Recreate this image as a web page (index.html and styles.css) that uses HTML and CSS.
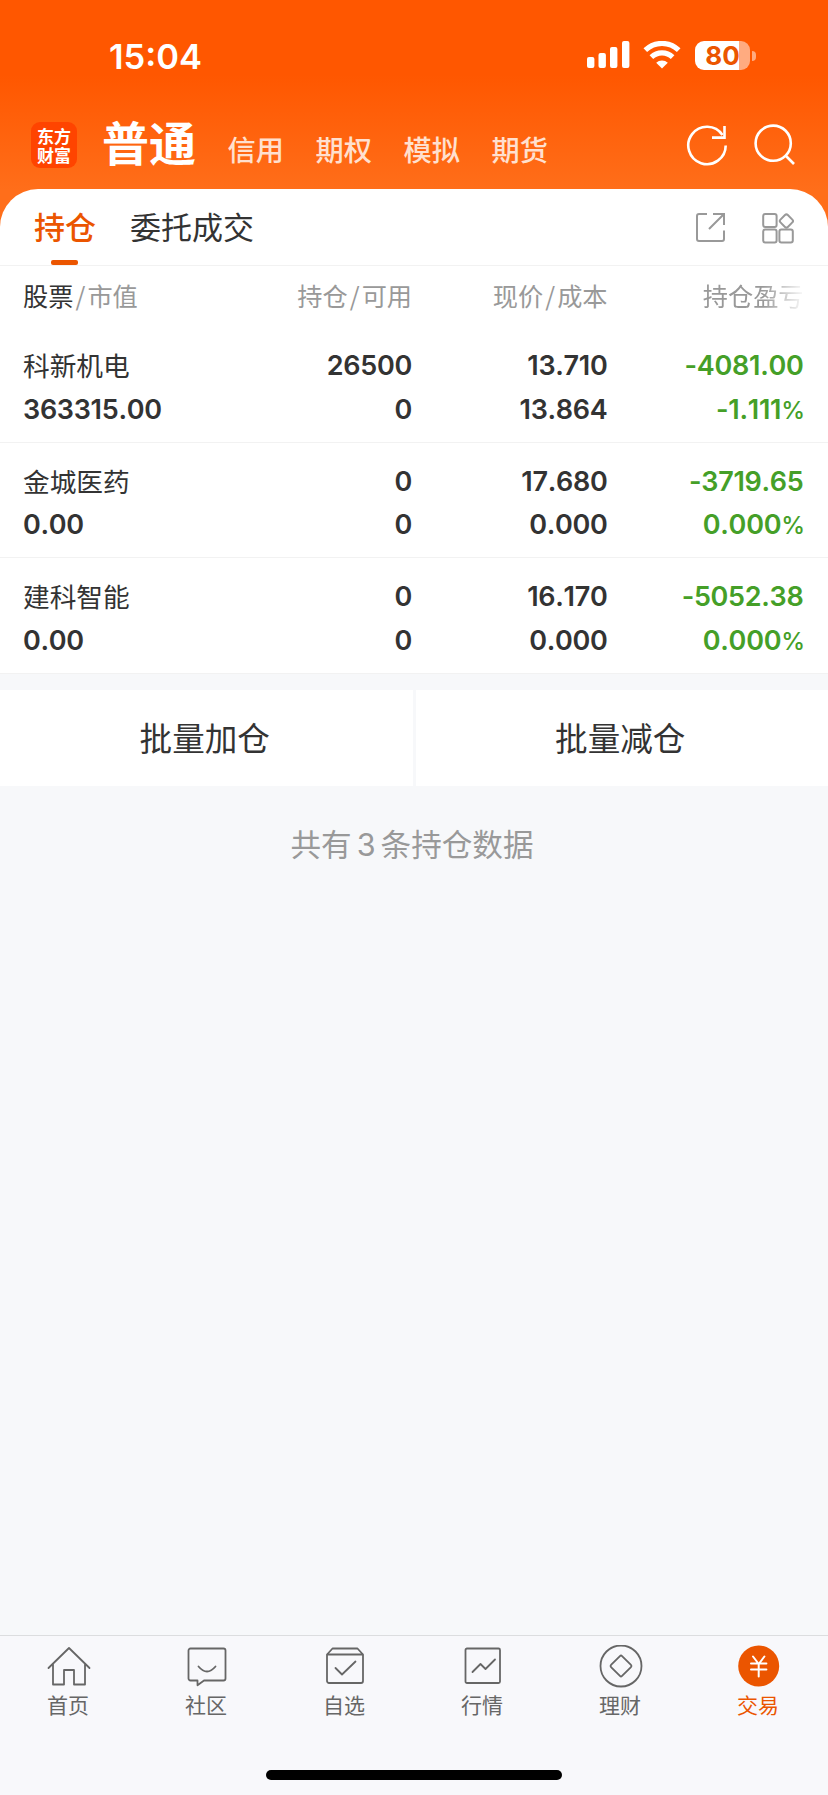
FILE: index.html
```html
<!DOCTYPE html>
<html lang="zh-CN">
<head>
    <meta charset="UTF-8">
    <meta name="viewport" content="width=device-width, initial-scale=1.0">
    <title>东方财富 - 交易</title>
    <link rel="stylesheet" href="styles.css">
</head>
<body>
    <header class="header">
        <div class="status-bar">
            <span class="time">15:04</span>
            <div class="status-icons">
                <svg class="signal" width="43" height="28" viewBox="0 0 43 28" fill="#fff">
                    <rect x="0" y="16" width="7.4" height="11" rx="2"/>
                    <rect x="11.5" y="12" width="7.4" height="15" rx="2"/>
                    <rect x="23" y="6" width="7.4" height="21" rx="2"/>
                    <rect x="35" y="0" width="7.4" height="27" rx="2"/>
                </svg>
                <svg class="wifi" width="38" height="28" viewBox="0 0 38 28" fill="none" stroke="#fff" stroke-width="5.2">
                    <path d="M2.3 9.2a24 24 0 0 1 33.4 0"/>
                    <path d="M8.4 16.2a15.2 15.2 0 0 1 21.2 0"/>
                    <path d="M19 27.5l-5.8-5.8a8.4 8.4 0 0 1 11.6 0z" fill="#fff" stroke="none"/>
                </svg>
                <div class="battery"><span>80</span></div>
                <i class="battery-cap"></i>
            </div>
        </div>
        <div class="nav">
            <div class="logo">东方财富</div>
            <div class="nav-list">
                <span class="nav-current">普通</span>
                <span>信用</span>
                <span>期权</span>
                <span>模拟</span>
                <span>期货</span>
            </div>
            <div class="nav-icons">
                <svg width="42" height="42" viewBox="0 0 42 42" fill="none" stroke="#fff" stroke-width="2.6">
                    <path d="M39.7 21.5A18.7 18.7 0 1 1 36.5 11"/>
                    <path d="M38.5 2v11.6H26"/>
                </svg>
                <svg width="42" height="42" viewBox="0 0 42 42" fill="none" stroke="#fff" stroke-width="2.6">
                    <circle cx="19.2" cy="19.2" r="17.6"/>
                    <path d="M31.5 31.5l8.5 8.5"/>
                </svg>
            </div>
        </div>
    </header>

    <main>
        <section class="panel">
            <div class="tabs">
                <span class="tab active">持仓</span>
                <span class="tab">委托成交</span>
                <div class="tab-icons">
                    <svg width="32" height="32" viewBox="0 0 32 32" fill="none" stroke="#999" stroke-width="2">
                        <path d="M12 2H4a2 2 0 0 0-2 2v23a2 2 0 0 0 2 2h23a2 2 0 0 0 2-2V18.5"/>
                        <path d="M18 2h11v11M29 2L14 17"/>
                    </svg>
                    <svg width="32" height="32" viewBox="0 0 32 32" fill="none" stroke="#999" stroke-width="2">
                        <rect x="1.2" y="2" width="13.4" height="13" rx="2"/>
                        <rect x="1.2" y="17.6" width="13.4" height="13" rx="2"/>
                        <rect x="17.4" y="17.6" width="13.4" height="13" rx="2"/>
                        <rect x="19.2" y="3.8" width="10.4" height="10.4" rx="2" transform="rotate(45 24.4 9)"/>
                    </svg>
                </div>
            </div>
            <div class="row head">
                <div><b>股票</b><i>/</i>市值</div>
                <div>持仓<i>/</i>可用</div>
                <div>现价<i>/</i>成本</div>
                <div class="fade">持仓盈亏</div>
            </div>
            <div class="row">
                <div><span class="name">科新机电</span><span>363315.00</span></div>
                <div><span>26500</span><span>0</span></div>
                <div><span>13.710</span><span>13.864</span></div>
                <div class="down"><span>-4081.00</span><span>-1.111<small>%</small></span></div>
            </div>
            <div class="row">
                <div><span class="name">金城医药</span><span>0.00</span></div>
                <div><span>0</span><span>0</span></div>
                <div><span>17.680</span><span>0.000</span></div>
                <div class="down"><span>-3719.65</span><span>0.000<small>%</small></span></div>
            </div>
            <div class="row">
                <div><span class="name">建科智能</span><span>0.00</span></div>
                <div><span>0</span><span>0</span></div>
                <div><span>16.170</span><span>0.000</span></div>
                <div class="down"><span>-5052.38</span><span>0.000<small>%</small></span></div>
            </div>
        </section>

        <div class="batch">
            <button>批量加仓</button>
            <button>批量减仓</button>
        </div>
        <p class="total">共有<em>3</em>条持仓数据</p>
    </main>

    <footer class="tabbar">
        <nav class="tabbar-list">
            <a class="tabbar-item">
                <svg width="44" height="44" viewBox="0 0 44 44">
                    <path d="M1.5 23L22 3l20.500 20M6 19v20.500h11V25h10v14.500h11V19"/>
                </svg>
                <span>首页</span>
            </a>
            <a class="tabbar-item">
                <svg width="44" height="44" viewBox="0 0 44 44">
                    <path d="M5.500 3.500h33a2 2 0 0 1 2 2V33.500a2 2 0 0 1-2 2H19l-6.500 4.800v-4.800H5.500a2 2 0 0 1-2-2V5.500a2 2 0 0 1 2-2z"/>
                    <path d="M13.500 21.500q8.500 10 17 0"/>
                </svg>
                <span>社区</span>
            </a>
            <a class="tabbar-item">
                <svg width="44" height="44" viewBox="0 0 44 44">
                    <path d="M4 9.500h36V36a2 2 0 0 1-2 2H6a2 2 0 0 1-2-2zM4 9.500l5.500-6h25l5.500 6"/>
                    <path d="M12.500 23l6.500 6.500L32.500 16.500"/>
                </svg>
                <span>自选</span>
            </a>
            <a class="tabbar-item">
                <svg width="44" height="44" viewBox="0 0 44 44">
                    <rect x="4.500" y="3.500" width="34.500" height="34.500" rx="1.500"/>
                    <path d="M11.500 27l8-8 5 5 9.500-9.500"/>
                </svg>
                <span>行情</span>
            </a>
            <a class="tabbar-item">
                <svg width="44" height="44" viewBox="0 0 44 44">
                    <circle cx="22" cy="21" r="20.500"/>
                    <rect x="14.200" y="13.200" width="15.600" height="15.600" rx="1.500" transform="rotate(45 22 21)"/>
                </svg>
                <span>理财</span>
            </a>
            <a class="tabbar-item active">
                <svg width="44" height="44" viewBox="0 0 44 44">
                    <circle class="coin" cx="21.700" cy="21" r="20.500"/>
                    <path class="yen" d="M16 11.500l5.700 7.500 5.700-7.500M21.700 19V31.500M14 18.500h15.400M14 24.500h15.400"/>
                </svg>
                <span>交易</span>
            </a>
        </nav>
        <div class="home-indicator"></div>
    </footer>
</body>
</html>
```

FILE: styles.css
```css
* {
    box-sizing: border-box;
}
body {
    margin: 0;
    height: 1795px;
    display: flex;
    flex-direction: column;
    background-color: #f7f8fa;
    color: #333;
    font-family: "Noto Sans CJK SC", sans-serif;
}
i, em {
    font-style: normal;
}

/* header */
.header {
    height: 231px;
    background: linear-gradient(#ff5700 0, #ff5700 75px, #ff6e1a 190px, #ff6e1a 100%);
    color: #fff;
}
.status-bar {
    display: flex;
    justify-content: space-between;
    height: 112px;
    padding: 35px 73px 0 109px;
}
.time {
    padding-top: 1px;
    font: 600 34.5px/42px Inter, sans-serif;
}
.status-icons {
    display: flex;
    align-items: flex-start;
    padding-top: 6px;
}
.wifi {
    margin-left: 13px;
}
.battery {
    width: 55px;
    height: 29px;
    margin-left: 14px;
    border-radius: 9px;
    background: linear-gradient(90deg, #fff 44px, #ffab80 44px);
    color: #eb5500;
    font: 700 26px/29px Inter, sans-serif;
    text-align: center;
}
.battery-cap {
    width: 4px;
    height: 10px;
    margin: 10px -1px 0 2px;
    border-radius: 0 5px 5px 0;
    background-color: #ffab80;
}
.nav {
    display: flex;
    padding: 0 32px 0 31px;
}
.logo {
    width: 46px;
    height: 46px;
    margin-top: 10px;
    padding: 4px 5px 0 6px;
    border-radius: 9px;
    background-color: #ff4400;
    font-size: 17px;
    font-weight: 700;
    line-height: 19px;
}
.nav-list {
    display: flex;
    align-items: baseline;
    gap: 31.6px;
    height: 66px;
    margin: -4px 0 0 25px;
    font-size: 28.2px;
    font-weight: 500;
    line-height: 66px;
    color: #ffe0cf;
}
.nav-current {
    font-size: 47px;
    font-weight: 700;
    color: #fff;
}
.nav-icons {
    display: flex;
    gap: 26px;
    margin: 12px 0 0 auto;
}

/* holdings */
.panel {
    margin-top: -42px;
    border-radius: 38px 38px 0 0;
    background-color: #fff;
}
.tabs {
    display: flex;
    height: 77px;
    padding: 0 34px 0 34px;
    border-bottom: 1px solid #f2f2f2;
    font-size: 31px;
    line-height: 74px;
}
.tab {
    margin-right: 34px;
}
.tab.active {
    position: relative;
    color: #eb5500;
    font-weight: 500;
}
.tab.active::after {
    content: "";
    position: absolute;
    left: 17px;
    bottom: 0;
    width: 27px;
    height: 5px;
    border-radius: 2px;
    background-color: #eb5500;
}
.tab-icons {
    display: flex;
    gap: 35px;
    margin: 23px 0 0 auto;
}
.row {
    display: grid;
    grid-template-columns: 193px 196px 195.5px 196px;
    height: 115.6px;
    padding: 17px 23px 0;
    border-bottom: 1px solid #f2f2f2;
    font: 600 27px/43.6px Inter, sans-serif;
    font-kerning: none;
    letter-spacing: -0.3px;
    text-align: right;
}
.row div:first-child {
    text-align: left;
}
.row span {
    display: block;
    height: 43.6px;
}
.row small {
    font-size: 24px;
    font-weight: 500;
    letter-spacing: -1.5px;
}
.row .name {
    font: 400 26.7px/42px "Noto Sans CJK SC", sans-serif;
    letter-spacing: 0;
}
.row .down {
    color: #459f28;
}
.row.head {
    height: 61px;
    padding-top: 7px;
    border: none;
    color: #999;
    font: 400 25.2px/44px "Noto Sans CJK SC", sans-serif;
    letter-spacing: 0;
}
.head b {
    color: #333;
    font-weight: 400;
}
.head i {
    display: inline-block;
    width: 14px;
    text-align: center;
}
.fade {
    -webkit-mask-image: linear-gradient(90deg, #000 155px, transparent 198px);
    mask-image: linear-gradient(90deg, #000 155px, transparent 198px);
}

.batch {
    display: grid;
    grid-template-columns: 1fr 1fr;
    gap: 3px;
    margin-top: 16px;
}
.batch button {
    height: 96px;
    padding: 0 3px 3px 0;
    border: none;
    background-color: #fff;
    color: #333;
    font: 400 32.6px/93px "Noto Sans CJK SC", sans-serif;
}
.total {
    margin: 35px 0 0;
    padding-right: 4px;
    color: #999;
    font-size: 30.6px;
    line-height: 44px;
    text-align: center;
}
.total em {
    padding: 0 5px;
    font-family: Inter, sans-serif;
}

/* bottom bar */
.tabbar {
    margin-top: auto;
    height: 160px;
    border-top: 1px solid #dcdddf;
    background-color: #f8f8fb;
}
.tabbar-list {
    display: grid;
    grid-template-columns: repeat(6, 1fr);
    height: 134px;
    padding-top: 9px;
}
.tabbar-item {
    display: flex;
    flex-direction: column;
    align-items: center;
    color: #666;
    font-size: 21px;
    line-height: 30px;
}
.tabbar-item span {
    margin-right: 2px;
}
.tabbar-item svg {
    fill: none;
    stroke: #666;
    stroke-width: 1.8;
    stroke-linejoin: round;
    stroke-linecap: round;
}
.tabbar-item.active {
    color: #eb5500;
}
.tabbar-item .coin {
    fill: #eb5500;
    stroke: none;
}
.tabbar-item .yen {
    stroke: #fff;
    stroke-width: 2;
}
.home-indicator {
    width: 296px;
    height: 10px;
    margin: 0 auto;
    border-radius: 5px;
    background-color: #000;
}
```
